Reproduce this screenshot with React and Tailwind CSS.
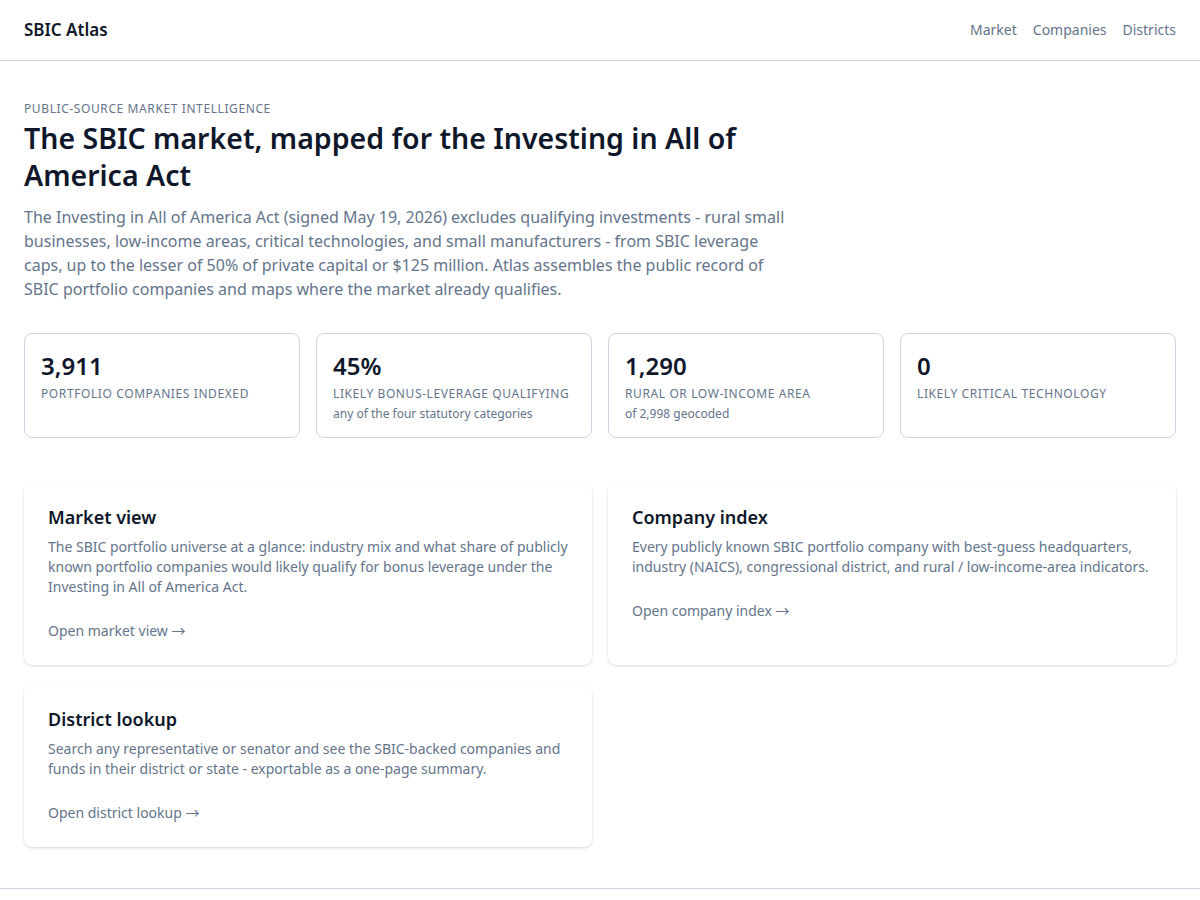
import React from 'react';

const stats = [
  { value: '3,911', label: 'Portfolio companies indexed' },
  { value: '45%', label: 'Likely bonus-leverage qualifying', sub: 'any of the four statutory categories' },
  { value: '1,290', label: 'Rural or low-income area', sub: 'of 2,998 geocoded' },
  { value: '0', label: 'Likely critical technology' },
];

const features = [
  {
    title: 'Market view',
    body: 'The SBIC portfolio universe at a glance: industry mix and what share of publicly known portfolio companies would likely qualify for bonus leverage under the Investing in All of America Act.',
    link: 'Open market view',
  },
  {
    title: 'Company index',
    body: 'Every publicly known SBIC portfolio company with best-guess headquarters, industry (NAICS), congressional district, and rural / low-income-area indicators.',
    link: 'Open company index',
  },
  {
    title: 'District lookup',
    body: 'Search any representative or senator and see the SBIC-backed companies and funds in their district or state - exportable as a one-page summary.',
    link: 'Open district lookup',
  },
];

const App = () => {
  return (
    <div className="min-h-screen bg-white text-[#0f172a] font-['Noto_Sans',sans-serif]">
      <header className="h-[61px] border-b border-[#cbd5e1] px-6 flex items-center justify-between">
        <a href="#" className="text-[17px] font-semibold text-[#0f172a]">SBIC Atlas</a>
        <nav className="flex items-center gap-4 text-sm text-[#64748b]">
          <a href="#">Market</a>
          <a href="#">Companies</a>
          <a href="#">Districts</a>
        </nav>
      </header>

      <main className="px-6 pt-10 pb-[41px]">
        <section>
          <p className="text-xs leading-4 uppercase tracking-wider text-[#64748b]">Public-source market intelligence</p>
          <h1 className="mt-[3px] max-w-3xl text-[28.5px] leading-[37px] font-semibold text-[#0f172a]">
            The SBIC market, mapped for the Investing in All of America Act
          </h1>
          <p className="mt-[11px] max-w-3xl text-base leading-6 text-[#64748b]">
            The Investing in All of America Act (signed May 19, 2026) excludes qualifying investments - rural small businesses, low-income areas, critical technologies, and small manufacturers - from SBIC leverage caps, up to the lesser of 50% of private capital or $125 million. Atlas assembles the public record of SBIC portfolio companies and maps where the market already qualifies.
          </p>
        </section>

        <section className="mt-8 grid grid-cols-4 gap-4">
          {stats.map((s) => (
            <div key={s.label} className="h-[105px] rounded-lg border border-[#cbd5e1] p-4">
              <div className="text-2xl leading-8 font-semibold text-[#0f172a]">{s.value}</div>
              <div className="mt-1 text-xs leading-4 uppercase tracking-wider text-[#64748b]">{s.label}</div>
              {s.sub && <div className="mt-1 text-xs leading-4 text-[#64748b]">{s.sub}</div>}
            </div>
          ))}
        </section>

        <section className="mt-[45px] grid grid-cols-2 gap-4 gap-y-5">
          {features.map((f) => (
            <div key={f.title} className="rounded-lg bg-white px-6 pt-5 pb-6 shadow-[0_1px_3px_rgba(15,23,42,0.12),0_1px_2px_rgba(15,23,42,0.06)]">
              <h2 className="text-lg leading-7 font-semibold text-[#0f172a]">{f.title}</h2>
              <p className="mt-1.5 text-sm leading-5 text-[#64748b]">{f.body}</p>
              <a href="#" className="mt-[23px] block text-sm leading-5 text-[#64748b]">
                {f.link} <span className="font-['Noto_Sans_CJK_SC',sans-serif]">→</span>
              </a>
            </div>
          ))}
        </section>
      </main>

      <footer className="border-t border-[#cbd5e1] h-10"></footer>
    </div>
  );
};

export default App;
